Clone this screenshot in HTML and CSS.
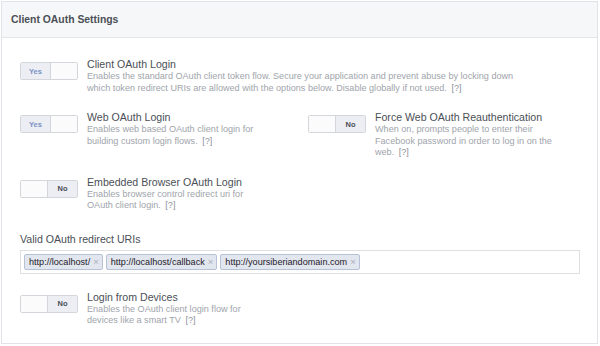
FILE: index.html
```html
<!doctype html>
<html>
    <head>
        <title>Client OAuth Settings</title>
        <link rel="stylesheet" href="styles.css">
    </head>
    <body>
        <div class="panel">
            <div class="panel-header">
                <h2>Client OAuth Settings</h2>
            </div>
            <div class="panel-body">
                <!-- Client OAuth login -->
                <div class="setting">
                    <div class="toggle on"><span class="side">Yes</span><span class="knob"></span></div>
                    <div class="info">
                        <div class="label">Client OAuth Login</div>
                        <div class="desc wide"><span>Enables the standard OAuth client token flow. Secure your application and prevent abuse by locking down which token redirect URIs are allowed with the options below. Disable globally if not used.</span> <span class="help">[?]</span></div>
                    </div>
                </div>

                <div class="setting-row">
                    <div class="setting">
                        <div class="toggle on"><span class="side">Yes</span><span class="knob"></span></div>
                        <div class="info">
                            <div class="label">Web OAuth Login</div>
                            <div class="desc"><span>Enables web based OAuth client login for building custom login flows.</span> <span class="help">[?]</span></div>
                        </div>
                    </div>
                    <div class="setting">
                        <div class="toggle off"><span class="knob"></span><span class="side">No</span></div>
                        <div class="info">
                            <div class="label">Force Web OAuth Reauthentication</div>
                            <div class="desc"><span>When on, prompts people to enter their Facebook password in order to log in on the web.</span> <span class="help">[?]</span></div>
                        </div>
                    </div>
                </div>

                <div class="setting">
                    <div class="toggle off"><span class="knob"></span><span class="side">No</span></div>
                    <div class="info">
                        <div class="label">Embedded Browser OAuth Login</div>
                        <div class="desc"><span>Enables browser control redirect uri for OAuth client login.</span> <span class="help">[?]</span></div>
                    </div>
                </div>

                <!-- Redirect URIs -->
                <div class="field">
                    <div class="field-label">Valid OAuth redirect URIs</div>
                    <div class="token-input">
                        <span class="token">http://localhost/<span class="remove">&times;</span></span>
                        <span class="token">http://localhost/callback<span class="remove">&times;</span></span>
                        <span class="token">http://yoursiberiandomain.com<span class="remove">&times;</span></span>
                    </div>
                </div>

                <div class="setting last">
                    <div class="toggle off"><span class="knob"></span><span class="side">No</span></div>
                    <div class="info">
                        <div class="label">Login from Devices</div>
                        <div class="desc"><span>Enables the OAuth client login flow for devices like a smart TV</span> <span class="help">[?]</span></div>
                    </div>
                </div>
            </div>
        </div>
    </body>
</html>
```

FILE: styles.css
```css
body {
    margin: 0;
    padding: 1px 0 0 1px;
    font-family: "Liberation Sans", Arial, sans-serif;
    color: #4b4f56;
    background-color: #ffffff;
}

.panel {
    width: 595px;
    height: 341px;
    border: 1px solid #e1e3e8;
    box-sizing: content-box;
    background-color: #ffffff;
}

.panel-header {
    height: 35px;
    background-color: #f6f7f9;
    border-bottom: 1px solid #e5e6e9;
    display: flex;
    align-items: center;
    padding-left: 9px;
}

.panel-header h2 {
    margin: 0;
    font-size: 10.4px;
    font-weight: bold;
    color: #4b4f56;
}

.panel-body {
    padding: 20px 18px 0 18px;
}

.setting {
    display: flex;
    align-items: flex-start;
    margin-bottom: 17px;
}

.setting.last {
    margin-bottom: 0;
}

.setting-row {
    display: grid;
    grid-template-columns: 288px 1fr;
}

.toggle {
    width: 58px;
    height: 18px;
    margin-top: 4px;
    border: 1px solid #d3d6db;
    border-radius: 2px;
    box-sizing: border-box;
    display: flex;
    flex-shrink: 0;
    overflow: hidden;
}

.toggle .side {
    width: 29px;
    background-color: #eceef3;
    font-size: 7.5px;
    font-weight: bold;
    display: flex;
    align-items: center;
    justify-content: center;
}

.toggle .knob {
    flex: 1;
    background-color: #fbfbfc;
}

.toggle.on .side {
    color: #7b93c6;
}

.toggle.on .knob {
    border-left: 1px solid #d3d6db;
}

.toggle.off .side {
    color: #4b4f56;
    border-left: 1px solid #d3d6db;
}

.info {
    margin-left: 9px;
}

.label {
    font-size: 10.6px;
    line-height: 13px;
    color: #4b4f56;
}

.desc {
    font-size: 9.1px;
    line-height: 11.5px;
    color: #a0a4ab;
    max-width: 180px;
}

.desc.wide {
    max-width: 440px;
}

.help {
    margin-left: 2px;
    color: #8d9199;
}

.field {
    padding-top: 4px;
}

.field-label {
    font-size: 10.6px;
    line-height: 13px;
    color: #4b4f56;
    margin-bottom: 4px;
}

.token-input {
    width: 560px;
    height: 24px;
    box-sizing: border-box;
    border: 1px solid #dddfe2;
    padding: 3px;
    display: flex;
    align-items: center;
    gap: 3px;
    margin-bottom: 17px;
}

.token {
    height: 16px;
    box-sizing: border-box;
    background-color: #e2e6ef;
    border: 1px solid #b8c2d6;
    border-radius: 2px;
    padding: 0 3px 0 4px;
    font-size: 9.1px;
    color: #1d2129;
    display: flex;
    align-items: center;
}

.remove {
    margin-left: 3px;
    color: #a8adb7;
    font-size: 9.5px;
}
```
